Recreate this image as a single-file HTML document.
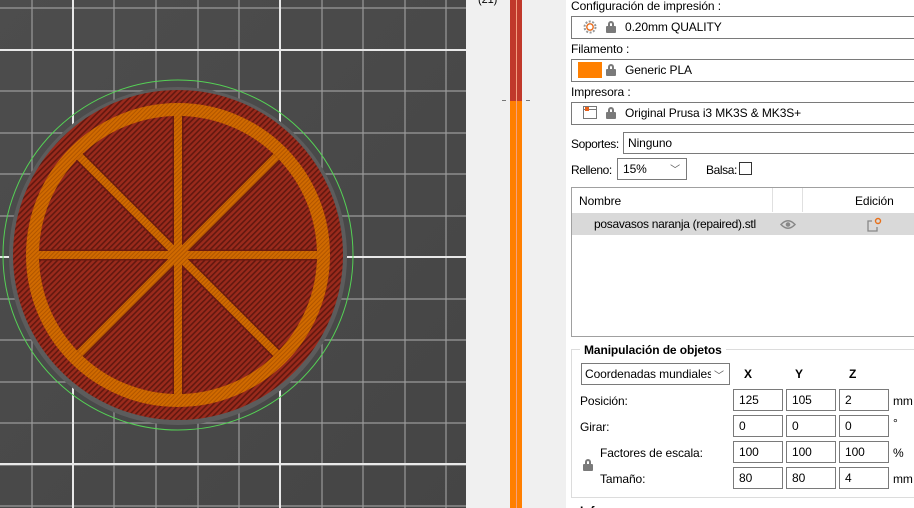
<!DOCTYPE html>
<html><head><meta charset="utf-8"><style>
*{box-sizing:border-box;margin:0;padding:0}
html,body{width:914px;height:508px;overflow:hidden}
body{background:#f0f0f0;font-family:"Liberation Sans",sans-serif;font-size:12px;color:#000;position:relative;letter-spacing:-0.1px}
.a{position:absolute}
.box{position:absolute;background:#fff;border:1px solid #7a7a7a}
.lock{position:absolute;width:10px;height:12px}
.lock:before{content:"";position:absolute;left:2px;top:0;width:6px;height:6px;border:2px solid #7a7a7a;border-bottom:none;border-radius:3px 3px 0 0;box-sizing:border-box}
.lock:after{content:"";position:absolute;left:0;top:5px;width:10px;height:7px;background:#7a7a7a;border-radius:1px}
.in{position:absolute;height:22px;background:#fff;border:1px solid #7a7a7a;padding:3px 5px;font-size:12px}
b{font-weight:bold}
</style></head><body>
<svg class="a" style="left:0;top:0" width="466" height="508">
<defs>
<linearGradient id="bg" x1="0" y1="0" x2="1" y2="1"><stop offset="0" stop-color="#4d4d4d"/><stop offset="1" stop-color="#454545"/></linearGradient>
<pattern id="h" width="4" height="4" patternUnits="userSpaceOnUse" patternTransform="rotate(45)"><rect width="4" height="4" fill="#9a2a1c"/><rect width="1.6" height="4" fill="#62180f"/></pattern>
<pattern id="o" width="3" height="3" patternUnits="userSpaceOnUse" patternTransform="rotate(45)"><rect width="3" height="3" fill="#d06a00"/><rect width="1" height="3" fill="#b05500"/></pattern>
<clipPath id="ic"><circle cx="178" cy="255" r="139"/></clipPath>
</defs>
<rect width="466" height="508" fill="url(#bg)"/>
<g stroke="#9a9a9a" stroke-width="1.2">
<line x1="32" y1="0" x2="32" y2="508"/><line x1="114" y1="0" x2="114" y2="508"/><line x1="156" y1="0" x2="156" y2="508"/><line x1="198" y1="0" x2="198" y2="508"/><line x1="239" y1="0" x2="239" y2="508"/><line x1="322" y1="0" x2="322" y2="508"/><line x1="363" y1="0" x2="363" y2="508"/><line x1="405" y1="0" x2="405" y2="508"/><line x1="446" y1="0" x2="446" y2="508"/>
<line x1="0" y1="8" x2="466" y2="8"/><line x1="0" y1="91" x2="466" y2="91"/><line x1="0" y1="133" x2="466" y2="133"/><line x1="0" y1="174" x2="466" y2="174"/><line x1="0" y1="216" x2="466" y2="216"/><line x1="0" y1="299" x2="466" y2="299"/><line x1="0" y1="340" x2="466" y2="340"/><line x1="0" y1="382" x2="466" y2="382"/><line x1="0" y1="423" x2="466" y2="423"/><line x1="0" y1="465" x2="466" y2="465"/><line x1="0" y1="506" x2="466" y2="506"/>
</g>
<g stroke="#e8e8e8" stroke-width="2">
<line x1="73" y1="0" x2="73" y2="508"/><line x1="280" y1="0" x2="280" y2="508"/>
<line x1="0" y1="50" x2="466" y2="50"/><line x1="0" y1="257" x2="466" y2="257"/><line x1="0" y1="464" x2="466" y2="464"/>
</g>
<circle cx="178" cy="255" r="175" fill="none" stroke="#55d055" stroke-width="1"/>
<circle cx="178" cy="256" r="169" fill="#5c5c5c"/>
<circle cx="178" cy="255" r="165" fill="url(#h)"/>
<circle cx="178" cy="255" r="152" fill="url(#o)"/>
<circle cx="178" cy="255" r="139" fill="url(#h)"/>
<g clip-path="url(#ic)">
<g stroke="#6a1a10" stroke-width="11">
<line x1="178" y1="100" x2="178" y2="410"/><line x1="20" y1="255" x2="340" y2="255"/>
<line x1="68" y1="145" x2="288" y2="365"/><line x1="288" y1="145" x2="68" y2="365"/>
</g>
<g stroke="url(#o)" stroke-width="8">
<line x1="178" y1="100" x2="178" y2="410"/><line x1="20" y1="255" x2="340" y2="255"/>
<line x1="68" y1="145" x2="288" y2="365"/><line x1="288" y1="145" x2="68" y2="365"/>
</g>
</g>
</svg>
<div class="a" style="left:466px;top:0;width:100px;height:508px;background:#f0f0f0"></div>
<div class="a" style="left:478px;top:-6px;font-size:11px">(21)</div>
<div class="a" style="left:510px;top:0;width:12px;height:101px;background:#c0392b"></div>
<div class="a" style="left:510px;top:101px;width:12px;height:407px;background:#ff7f00"></div>
<div class="a" style="left:516px;top:0;width:1px;height:508px;background:#f4a080"></div>
<div class="a" style="left:502px;top:100px;width:4px;height:1px;background:#777"></div>
<div class="a" style="left:526px;top:100px;width:4px;height:1px;background:#777"></div>
<div class="a" style="left:566px;top:0;width:348px;height:508px;background:#fff"></div>

<div class="a" style="left:571px;top:-1px">Configuración de impresión :</div>
<div class="box" style="left:571px;top:16px;width:350px;height:23px"></div>
<svg class="a" style="left:583px;top:20px" width="14" height="14"><circle cx="7" cy="7" r="5.5" fill="none" stroke="#999" stroke-width="2" stroke-dasharray="2 1.5"/><circle cx="7" cy="7" r="3.2" fill="none" stroke="#e86a1a" stroke-width="1.4"/></svg>
<span class="lock" style="left:606px;top:21px"></span>
<div class="a" style="left:625px;top:20px">0.20mm QUALITY</div>

<div class="a" style="left:571px;top:42px">Filamento :</div>
<div class="box" style="left:571px;top:59px;width:350px;height:23px"></div>
<div class="a" style="left:578px;top:62px;width:24px;height:16px;background:#ff8000"></div>
<span class="lock" style="left:606px;top:64px"></span>
<div class="a" style="left:625px;top:63px">Generic PLA</div>

<div class="a" style="left:571px;top:85px">Impresora :</div>
<div class="box" style="left:571px;top:102px;width:350px;height:23px"></div>
<div class="a" style="left:583px;top:106px;width:14px;height:13px;border:1px solid #777;background:#fff"></div>
<div class="a" style="left:583px;top:109px;width:14px;height:1px;background:#777"></div>
<div class="a" style="left:585px;top:107px;width:4px;height:4px;background:#e8601a"></div>
<span class="lock" style="left:606px;top:107px"></span>
<div class="a" style="left:625px;top:106px">Original Prusa i3 MK3S &amp; MK3S+</div>

<div class="a" style="left:571px;top:137px;letter-spacing:-0.4px">Soportes:</div>
<div class="box" style="left:623px;top:132px;width:300px;height:22px;padding:3px 4px">Ninguno</div>
<div class="a" style="left:571px;top:163px;letter-spacing:-0.4px">Relleno:</div>
<div class="box" style="left:617px;top:158px;width:70px;height:22px;padding:3px 5px">15%<span style="position:absolute;right:6px;top:2px;color:#555;font-size:10px">﹀</span></div>
<div class="a" style="left:706px;top:163px;letter-spacing:-0.4px">Balsa:</div>
<div class="a" style="left:739px;top:162px;width:13px;height:13px;border:1px solid #333;background:#fff"></div>

<div class="box" style="left:571px;top:187px;width:350px;height:150px;border-color:#a0a0a0"></div>
<div class="a" style="left:772px;top:188px;width:1px;height:24px;background:#e0e0e0"></div>
<div class="a" style="left:802px;top:188px;width:1px;height:24px;background:#e0e0e0"></div>
<div class="a" style="left:579px;top:194px">Nombre</div>
<div class="a" style="left:855px;top:194px">Edición</div>
<div class="a" style="left:572px;top:213px;width:342px;height:22px;background:#d9d9d9"></div>
<div class="a" style="left:594px;top:217px;letter-spacing:-0.3px">posavasos naranja (repaired).stl</div>
<svg class="a" style="left:780px;top:219px" width="16" height="11"><path d="M1 5.5Q8 -2 15 5.5Q8 13 1 5.5Z" fill="none" stroke="#888" stroke-width="1.5"/><circle cx="8" cy="5.5" r="2.3" fill="#888"/></svg>
<svg class="a" style="left:866px;top:217px" width="16" height="16"><path d="M6 4H2V14H11V10" fill="none" stroke="#888" stroke-width="1.3"/><circle cx="12" cy="4" r="2.5" fill="none" stroke="#e8701a" stroke-width="1.4"/></svg>

<div class="a" style="left:571px;top:349px;width:350px;height:149px;border:1px solid #dcdcdc"></div>
<div class="a" style="left:580px;top:343px;padding:0 4px;background:#fff;font-weight:bold">Manipulación de objetos</div>
<div class="box" style="left:581px;top:363px;width:149px;height:22px;padding:3px 3px;overflow:hidden;white-space:nowrap">Coordenadas mundiales<span style="position:absolute;right:0;top:0;width:18px;height:20px;background:#fff;color:#555;font-size:10px;padding:3px 3px">﹀</span></div>
<b class="a" style="left:744px;top:367px">X</b>
<b class="a" style="left:795px;top:367px">Y</b>
<b class="a" style="left:849px;top:367px">Z</b>
<div class="a" style="left:580px;top:394px">Posición:</div>
<div class="a" style="left:580px;top:420px">Girar:</div>
<div class="a" style="left:600px;top:446px">Factores de escala:</div>
<div class="a" style="left:600px;top:472px">Tamaño:</div>
<span class="lock" style="left:583px;top:459px"></span>
<div class="in" style="left:733px;top:389px;width:50px">125</div><div class="in" style="left:786px;top:389px;width:50px">105</div><div class="in" style="left:839px;top:389px;width:50px">2</div><div class="a" style="left:893px;top:394px">mm</div>
<div class="in" style="left:733px;top:415px;width:50px">0</div><div class="in" style="left:786px;top:415px;width:50px">0</div><div class="in" style="left:839px;top:415px;width:50px">0</div><div class="a" style="left:893px;top:416px">°</div>
<div class="in" style="left:733px;top:441px;width:50px">100</div><div class="in" style="left:786px;top:441px;width:50px">100</div><div class="in" style="left:839px;top:441px;width:50px">100</div><div class="a" style="left:893px;top:446px">%</div>
<div class="in" style="left:733px;top:467px;width:50px">80</div><div class="in" style="left:786px;top:467px;width:50px">80</div><div class="in" style="left:839px;top:467px;width:50px">4</div><div class="a" style="left:893px;top:472px">mm</div>
<div class="a" style="left:580px;top:504px;font-weight:bold">Info</div>
</body></html>
